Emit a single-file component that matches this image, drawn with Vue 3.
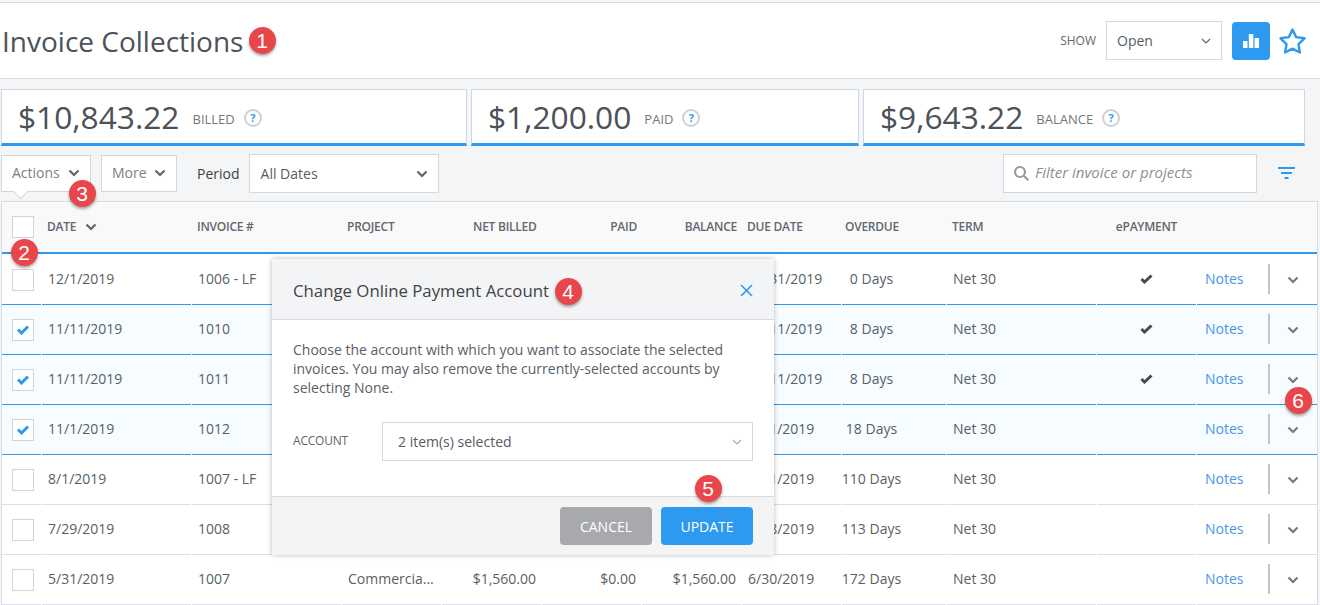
<script setup>
const stats = [
  { amount: '$10,843.22', label: 'BILLED', w: 466 },
  { amount: '$1,200.00', label: 'PAID', w: 388 },
  { amount: '$9,643.22', label: 'BALANCE', w: 442 }
]
const rows = [
  { date: '12/1/2019', inv: '1006 - LF', due: '12/31/2019', over: '0 Days', sel: false, pay: true, blue: true },
  { date: '11/11/2019', inv: '1010', due: '12/11/2019', over: '8 Days', sel: true, pay: true, blue: true },
  { date: '11/11/2019', inv: '1011', due: '12/11/2019', over: '8 Days', sel: true, pay: true, blue: true },
  { date: '11/1/2019', inv: '1012', due: '12/1/2019', over: '18 Days', sel: true, pay: false, blue: true },
  { date: '8/1/2019', inv: '1007 - LF', due: '8/31/2019', over: '110 Days', sel: false, pay: false, blue: false },
  { date: '7/29/2019', inv: '1008', due: '8/28/2019', over: '113 Days', sel: false, pay: false, blue: false },
  { date: '5/31/2019', inv: '1007', project: 'Commercia...', net: '$1,560.00', paid: '$0.00', bal: '$1,560.00', due: '6/30/2019', over: '172 Days', sel: false, pay: false, blue: false }
]
const badges = [
  { n: 1, x: 262, y: 40 },
  { n: 2, x: 24, y: 252 },
  { n: 3, x: 82, y: 193 },
  { n: 4, x: 568, y: 291 },
  { n: 5, x: 708, y: 488 },
  { n: 6, x: 1298, y: 400 }
]
</script>

<template>
  <div class="page">
    <header class="top">
      <h1 class="title">Invoice Collections</h1>
      <div class="top-right">
        <span class="show">SHOW</span>
        <div class="select open-select">
          <span>Open</span>
          <svg class="thin-chev" width="10" height="6" viewBox="0 0 10 6"><path d="M1 1l4 4 4-4" /></svg>
        </div>
        <button class="chart-btn" aria-label="Chart">
          <svg width="16" height="14" viewBox="0 0 16 14" fill="#fff">
            <rect x="0" y="7" width="4.5" height="7" />
            <rect x="5.8" y="0" width="4.5" height="14" />
            <rect x="11.5" y="4" width="4.5" height="10" />
          </svg>
        </button>
        <svg class="star" width="27" height="26" viewBox="0 0 27 26">
          <path d="M13.5 1.5l3.7 7.6 8.3 1.2-6 5.9 1.4 8.3-7.4-3.9-7.4 3.9 1.4-8.3-6-5.9 8.3-1.2z" />
        </svg>
      </div>
    </header>

    <section class="stats">
      <div v-for="s in stats" :key="s.label" class="stat" :style="{ width: s.w + 'px' }">
        <span class="amount">{{ s.amount }}</span>
        <span class="stat-label">{{ s.label }}</span>
        <span class="help">?</span>
      </div>
    </section>

    <section class="toolbar">
      <div class="drop actions">
        Actions
        <svg class="chev" width="12" height="8" viewBox="0 0 12 8"><path d="M1.5 1.5L6 6l4.5-4.5" /></svg>
        <i class="caret"></i>
      </div>
      <div class="drop more">
        More
        <svg class="chev" width="12" height="8" viewBox="0 0 12 8"><path d="M1.5 1.5L6 6l4.5-4.5" /></svg>
      </div>
      <span class="period">Period</span>
      <div class="select period-select">
        <span>All Dates</span>
        <svg class="chev" width="12" height="8" viewBox="0 0 12 8"><path d="M1.5 1.5L6 6l4.5-4.5" /></svg>
      </div>
      <div class="search">
        <svg class="mag" width="17" height="17" viewBox="0 0 17 17">
          <circle cx="7" cy="7" r="5" />
          <path d="M10.8 10.8l4.4 4.4" />
        </svg>
        <span class="placeholder">Filter invoice or projects</span>
      </div>
      <svg class="filter" width="17" height="13" viewBox="0 0 17 13">
        <rect x="0" y="0" width="17" height="2" />
        <rect x="3" y="5" width="11" height="2" />
        <rect x="6.5" y="10" width="4" height="2" />
      </svg>
    </section>

    <section class="table">
      <div class="grid head">
        <div class="cell"><span class="box"></span></div>
        <div class="cell pad">DATE
          <svg class="chev date-chev" width="12" height="8" viewBox="0 0 12 8"><path d="M1.5 1.5L6 6l4.5-4.5" /></svg>
        </div>
        <div class="cell pad">INVOICE #</div>
        <div class="cell pad">PROJECT</div>
        <div class="cell net-head">NET BILLED</div>
        <div class="cell right">PAID</div>
        <div class="cell right">BALANCE</div>
        <div class="cell pad">DUE DATE</div>
        <div class="cell over-head">OVERDUE</div>
        <div class="cell pad">TERM</div>
        <div class="cell mid">ePAYMENT</div>
        <div class="cell"></div>
      </div>
      <div class="body">
        <div v-for="r in rows" :key="r.inv" class="grid row" :class="{ selected: r.sel, blue: r.blue }">
          <div class="cell">
            <span class="box">
              <svg v-if="r.sel" width="14" height="11" viewBox="0 0 14 11"><path d="M2 5.5l3.5 3.5L12 2.5" /></svg>
            </span>
          </div>
          <div class="cell pad">{{ r.date }}</div>
          <div class="cell pad">{{ r.inv }}</div>
          <div class="cell pad">{{ r.project }}</div>
          <div class="cell right">{{ r.net }}</div>
          <div class="cell right">{{ r.paid }}</div>
          <div class="cell right">{{ r.bal }}</div>
          <div class="cell pad">{{ r.due }}</div>
          <div class="cell over">{{ r.over }}</div>
          <div class="cell pad">Net 30</div>
          <div class="cell mid">
            <svg v-if="r.pay" class="paycheck" width="13" height="10" viewBox="0 0 13 10"><path d="M1.5 5l3 3 7-6.5" /></svg>
          </div>
          <div class="cell notes">
            <a class="link">Notes</a>
            <i class="divider"></i>
            <svg class="chev row-chev" width="12" height="8" viewBox="0 0 12 8"><path d="M1.5 1.5L6 6l4.5-4.5" /></svg>
          </div>
        </div>
      </div>
    </section>

    <aside class="modal">
      <div class="modal-head">
        <span class="modal-title">Change Online Payment Account</span>
        <svg class="close" width="13" height="13" viewBox="0 0 13 13"><path d="M1 1l11 11M12 1L1 12" /></svg>
      </div>
      <div class="modal-body">
        <p class="copy">Choose the account with which you want to associate the selected invoices. You may also remove the currently-selected accounts by selecting None.</p>
        <div class="account">
          <span class="account-label">ACCOUNT</span>
          <div class="select account-select">
            <span>2 item(s) selected</span>
            <svg class="thin-chev light" width="10" height="6" viewBox="0 0 10 6"><path d="M1 1l4 4 4-4" /></svg>
          </div>
        </div>
      </div>
      <div class="modal-foot">
        <button class="btn cancel">CANCEL</button>
        <button class="btn update">UPDATE</button>
      </div>
    </aside>

    <span
      v-for="b in badges"
      :key="b.n"
      class="badge"
      :style="{ left: b.x - 13.5 + 'px', top: b.y - 13.5 + 'px' }"
    >{{ b.n }}</span>
  </div>
</template>

<style>
html, body { margin: 0; background: #f3f5f7; }
</style>

<style scoped>
.page {
  position: relative;
  width: 1320px;
  height: 605px;
  overflow: hidden;
  background: #f3f5f7;
  font-family: "Open Sans", sans-serif;
  font-size: 14px;
  color: #585f66;
  box-sizing: border-box;
}
.top {
  margin: 2px 0;
  height: 75px;
  border-top: 1px solid #d5dce2;
  border-bottom: 1px solid #d5dce2;
  background: #fff;
  display: flex;
  align-items: center;
  justify-content: space-between;
}
.title {
  margin: 0 0 0 2px;
  font-size: 28px;
  font-weight: 400;
  color: #4c5258;
  line-height: 1;
}
.top-right {
  display: flex;
  align-items: center;
  padding-right: 14px;
}
.show { font-size: 12px; color: #666; margin-right: 10px; }
.select {
  display: flex;
  align-items: center;
  justify-content: space-between;
  box-sizing: border-box;
  background: #fff;
  border: 1px solid #d0d9e0;
  color: #555c63;
}
.open-select { width: 116px; height: 39px; padding: 0 10px 0 10px; margin-right: 10px; }
.thin-chev path { fill: none; stroke: #666; stroke-width: 1.2; }
.thin-chev.light path { stroke: #a8adb2; }
.chart-btn {
  width: 38px;
  height: 38px;
  padding: 0;
  border: 0;
  border-radius: 4px;
  background: #2d9af0;
  display: flex;
  align-items: center;
  justify-content: center;
  margin-right: 9px;
}
.star path { fill: none; stroke: #2d9af0; stroke-width: 2.4; stroke-linejoin: round; }
.stats {
  display: flex;
  gap: 4px;
  padding: 8px 0 0 1px;
}
.stat {
  box-sizing: border-box;
  height: 57px;
  background: #fff;
  border: 1px solid #cfd8e0;
  border-bottom: 3px solid #2d9af0;
  display: flex;
  align-items: center;
  padding-left: 16px;
}
.amount { font-size: 31.7px; color: #4c5258; margin-right: 13px; }
.stat-label { font-size: 13px; color: #777; margin-right: 9px; position: relative; top: 2px; }
.help {
  box-sizing: border-box;
  width: 18px;
  height: 18px;
  border: 2px solid #d0d0d0;
  border-radius: 50%;
  display: flex;
  align-items: center;
  justify-content: center;
  font-size: 11px;
  font-weight: 700;
  color: #2d9af0;
  position: relative;
  top: 1px;
}
.toolbar {
  display: flex;
  align-items: center;
  height: 39px;
  padding: 8px 25px 0 1px;
}
.drop {
  position: relative;
  box-sizing: border-box;
  height: 37px;
  background: #fff;
  border: 1px solid #cfd8e0;
  display: flex;
  align-items: center;
  justify-content: space-between;
  padding: 0 10px 3px 10px;
  color: #7b8187;
}
.drop .chev { margin-top: 2px; }
.actions { width: 90px; margin-right: 10px; }
.more { width: 76px; margin-right: 20px; }
.caret {
  position: absolute;
  left: 13px;
  bottom: -6px;
  box-sizing: border-box;
  width: 11px;
  height: 11px;
  background: #fff;
  border-right: 1px solid #cfd8e0;
  border-bottom: 1px solid #cfd8e0;
  transform: rotate(45deg);
}
.chev path { fill: none; stroke: #5f656b; stroke-width: 2.2; }
.period { color: #3f3f3f; margin-right: 9px; }
.period-select { width: 190px; height: 39px; padding: 0 10px 0 11px; }
.search {
  box-sizing: border-box;
  width: 254px;
  height: 39px;
  margin-left: auto;
  margin-right: 21px;
  background: #fff;
  border: 1px solid #cfd8e0;
  display: flex;
  align-items: center;
  padding-left: 9px;
  font-size: 15px;
  font-style: italic;
  color: #8b8f93;
}
.placeholder { margin-bottom: 3px; }
.mag { margin-right: 5px; }
.mag circle, .mag path { fill: none; stroke: #9b9b9b; stroke-width: 2.2; }
.filter { fill: #2d9af0; }
.table {
  box-sizing: border-box;
  width: 1317px;
  margin: 8px 0 0 1px;
  border: 1px solid #d5dce2;
  border-bottom: 0;
  background: #fff;
}
.grid {
  display: grid;
  grid-template-columns: 39px 149px 149px 99px 99px 99px 99px 99px 104px 149px 99px 120px;
  column-gap: 1px;
}
.head {
  height: 50px;
  background: #f9f9fa;
  border-bottom: 2px solid #2d9af0;
  font-size: 12px;
  font-weight: 600;
  color: #62686e;
  letter-spacing: -0.25px;
}
.cell {
  display: flex;
  align-items: center;
  min-width: 0;
  white-space: nowrap;
}
.head .cell:not(:first-child) { padding-bottom: 1px; }
.cell:first-child { padding-left: 10px; }
.pad { padding-left: 6px; }
.head .pad { padding-left: 5px; }
.right { justify-content: flex-end; padding-right: 5px; }
.head .right { padding-right: 4px; }
.mid { justify-content: center; }
.net-head { padding-left: 31px; }
.over-head { padding-left: 3px; }
.over { justify-content: center; padding-right: 45px; }
.date-chev { margin-left: 9px; }
.box {
  box-sizing: border-box;
  width: 22px;
  height: 22px;
  flex: none;
  background: #fff;
  border: 1px solid #cfd5db;
  display: flex;
  align-items: center;
  justify-content: center;
}
.box path { fill: none; stroke: #2d9af0; stroke-width: 3; }
.body { padding-top: 1px; }
.row { height: 50px; box-sizing: border-box; background: #fff; }
.row .cell { border-bottom: 1px solid #dcdfe6; }
.row .cell:not(:first-child) { padding-bottom: 2px; }
.row.blue .cell { border-bottom-color: #2d9af0; }
.row.selected { background: #f6fcff; }
.paycheck path { fill: none; stroke: #4a4a4a; stroke-width: 3; }
.notes { padding-left: 8px; }
.link { flex: 0 0 63px; color: #4a97e8; }
.divider { flex: none; width: 2px; height: 30px; background: #c4c4c4; }
.row-chev { margin: 2px 0 0 17px; }
.row-chev path { stroke: #77787a; }
.modal {
  position: absolute;
  left: 272px;
  top: 259px;
  width: 502px;
  height: 296px;
  display: flex;
  flex-direction: column;
  background: #fff;
  box-shadow: 0 0 5px rgba(0, 0, 0, .28);
}
.modal-head {
  height: 61px;
  flex: none;
  box-sizing: border-box;
  background: #f3f4f6;
  border-bottom: 1px solid #d8dadd;
  display: flex;
  align-items: center;
  justify-content: space-between;
  padding: 2px 21px 0 21px;
}
.modal-title { font-size: 16.8px; color: #3f4347; }
.close { margin-top: 1px; }
.close path { stroke: #2d9af0; stroke-width: 1.6; fill: none; }
.modal-body { flex: 1; padding: 0 21px; }
.copy { margin: 20px 0 0; font-size: 14px; line-height: 19px; color: #5a6066; }
.account { display: flex; align-items: center; margin-top: 25px; }
.account-label { width: 89px; font-size: 12px; color: #666; letter-spacing: -0.2px; position: relative; top: -1px; }
.account-select { width: 371px; height: 39px; padding: 0 10px 0 15px; }
.modal-foot {
  height: 59px;
  flex: none;
  box-sizing: border-box;
  background: #f4f4f4;
  border-top: 1px solid #d8dadd;
  display: flex;
  justify-content: flex-end;
  gap: 9px;
  padding: 10px 21px 0 0;
}
.btn {
  width: 92px;
  height: 38px;
  border: 0;
  border-radius: 4px;
  color: #fff;
  font: 400 14px "Open Sans", sans-serif;
}
.cancel { background: #a7a9ac; }
.update { background: #2d9af0; }
.badge {
  position: absolute;
  width: 27px;
  height: 27px;
  border-radius: 50%;
  background: #e8464a;
  color: #fff;
  font: 400 21px/27px "Liberation Sans", sans-serif;
  text-align: center;
  box-shadow: 0 2px 3px rgba(0, 0, 0, .35);
}
</style>
